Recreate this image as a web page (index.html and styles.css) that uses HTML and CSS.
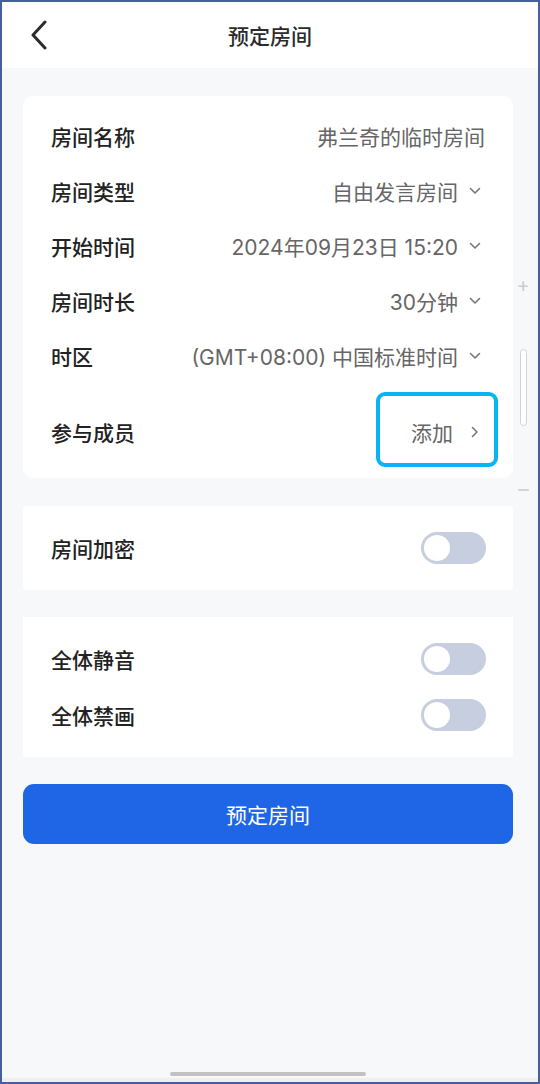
FILE: index.html
```html
<!DOCTYPE html>
<html lang="zh-CN">
<head>
    <meta charset="UTF-8">
    <meta name="viewport" content="width=device-width, initial-scale=1.0">
    <title>预定房间</title>
    <link rel="stylesheet" href="styles.css">
</head>
<body>
    <div class="phone">
        <header class="nav">
            <button class="back" aria-label="返回">
                <svg width="18" height="30" viewBox="0 0 18 30">
                    <path d="M15 2 L3 15 L15 28" fill="none" stroke="#2b2b2b" stroke-width="3" stroke-linecap="round" stroke-linejoin="round"/>
                </svg>
            </button>
            <h1 class="nav-title">预定房间</h1>
        </header>

        <main class="content">
            <section class="card card-main">
                <div class="row">
                    <span class="label">房间名称</span>
                    <span class="value">弗兰奇的临时房间</span>
                </div>
                <div class="row">
                    <span class="label">房间类型</span>
                    <span class="value">自由发言房间
                        <svg class="arrow" width="12" height="8" viewBox="0 0 12 8"><path d="M1.5 1.5 L6 6 L10.5 1.5" fill="none" stroke="#777" stroke-width="1.6" stroke-linecap="round" stroke-linejoin="round"/></svg>
                    </span>
                </div>
                <div class="row">
                    <span class="label">开始时间</span>
                    <span class="value">2024年09月23日 15:20
                        <svg class="arrow" width="12" height="8" viewBox="0 0 12 8"><path d="M1.5 1.5 L6 6 L10.5 1.5" fill="none" stroke="#777" stroke-width="1.6" stroke-linecap="round" stroke-linejoin="round"/></svg>
                    </span>
                </div>
                <div class="row">
                    <span class="label">房间时长</span>
                    <span class="value">30分钟
                        <svg class="arrow" width="12" height="8" viewBox="0 0 12 8"><path d="M1.5 1.5 L6 6 L10.5 1.5" fill="none" stroke="#777" stroke-width="1.6" stroke-linecap="round" stroke-linejoin="round"/></svg>
                    </span>
                </div>
                <div class="row">
                    <span class="label">时区</span>
                    <span class="value">(GMT+08:00) 中国标准时间
                        <svg class="arrow" width="12" height="8" viewBox="0 0 12 8"><path d="M1.5 1.5 L6 6 L10.5 1.5" fill="none" stroke="#777" stroke-width="1.6" stroke-linecap="round" stroke-linejoin="round"/></svg>
                    </span>
                </div>
                <div class="row row-members">
                    <span class="label">参与成员</span>
                    <span class="value">添加
                        <svg class="arrow arrow-right" width="8" height="12" viewBox="0 0 8 12"><path d="M1.5 1.5 L6 6 L1.5 10.5" fill="none" stroke="#777" stroke-width="1.6" stroke-linecap="round" stroke-linejoin="round"/></svg>
                    </span>
                    <span class="highlight"></span>
                </div>
            </section>

            <section class="card card-flat">
                <div class="row row-switch">
                    <span class="label">房间加密</span>
                    <span class="toggle"></span>
                </div>
            </section>

            <section class="card card-flat">
                <div class="row row-switch">
                    <span class="label">全体静音</span>
                    <span class="toggle"></span>
                </div>
                <div class="row row-switch">
                    <span class="label">全体禁画</span>
                    <span class="toggle"></span>
                </div>
            </section>

            <button class="submit">预定房间</button>

            <div class="zoom-ctrl">
                <span class="zoom-plus">+</span>
                <span class="zoom-track"></span>
                <span class="zoom-minus"></span>
            </div>
        </main>

        <div class="home-area">
            <span class="home-bar"></span>
        </div>
    </div>
</body>
</html>
```

FILE: styles.css
```css
* {
    box-sizing: border-box;
}

body {
    margin: 0;
    font-family: "Inter", "Noto Sans CJK SC", sans-serif;
    background: #fff;
}

.phone {
    width: 540px;
    height: 1084px;
    border: 2px solid #45609c;
    display: flex;
    flex-direction: column;
    background: #f7f8fa;
    overflow: hidden;
}

.nav {
    height: 66px;
    flex: none;
    background: #fff;
    display: grid;
    grid-template-columns: 1fr auto 1fr;
    align-items: center;
}

.back {
    justify-self: start;
    margin-left: 28px;
    padding: 0;
    border: none;
    background: none;
    display: flex;
    cursor: pointer;
}

.nav-title {
    margin: 0;
    font-size: 21px;
    font-weight: 500;
    color: #2b2b2b;
    font-family: "Noto Sans CJK SC", sans-serif;
}

.content {
    flex: 1;
    position: relative;
    padding: 28px 25px 0 21px;
    display: flex;
    flex-direction: column;
    gap: 27px;
}

.card {
    background: #fff;
}

.card-main {
    border-radius: 10px;
    padding-top: 12px;
    padding-bottom: 2px;
    margin-bottom: 1px;
}

.card-flat {
    padding: 14px 0 14px;
}

.row {
    height: 55px;
    padding: 0 28px;
    display: flex;
    align-items: center;
    justify-content: space-between;
}

.row-switch {
    height: 56px;
    padding-right: 27px;
}

.row-members {
    position: relative;
    height: 93px;
    padding-top: 4px;
}

.label {
    font-family: "Noto Sans CJK SC", sans-serif;
    font-size: 21px;
    font-weight: 500;
    color: #222;
}

.value {
    display: flex;
    align-items: center;
    gap: 10px;
    font-size: 21px;
    color: #666;
}

.arrow {
    margin-left: 1px;
    margin-right: 4px;
}

.arrow-right {
    margin-left: 8px;
    margin-right: 6px;
}

.highlight {
    position: absolute;
    right: 15px;
    top: 9px;
    width: 122px;
    height: 75px;
    border: 4px solid #0ab3f5;
    border-radius: 9px;
}

.toggle {
    position: relative;
    width: 65px;
    height: 32px;
    margin-top: -1px;
    border-radius: 16px;
    background: #c6cedf;
}

.toggle::after {
    content: "";
    position: absolute;
    left: 3px;
    top: 3px;
    width: 26px;
    height: 26px;
    border-radius: 50%;
    background: #fff;
}

.submit {
    height: 60px;
    border: none;
    border-radius: 11px;
    background: #1e66e6;
    color: #fff;
    font-family: "Noto Sans CJK SC", sans-serif;
    font-size: 21px;
    cursor: pointer;
}

.zoom-ctrl {
    position: absolute;
    right: 9px;
    top: 209px;
    width: 12px;
    display: flex;
    flex-direction: column;
    align-items: center;
}

.zoom-plus {
    font-size: 20px;
    line-height: 16px;
    color: #c9cdd4;
}

.zoom-track {
    margin-top: 56px;
    width: 7px;
    height: 77px;
    border: 1px solid #cfd3da;
    border-radius: 4px;
    background: #fff;
}

.zoom-minus {
    margin-top: 63px;
    width: 11px;
    height: 2px;
    background: #cfd3da;
    border-radius: 1px;
}

.home-area {
    height: 12px;
    flex: none;
    position: relative;
    border-bottom: 4px solid #efefef;
}

.home-bar {
    position: absolute;
    left: 168px;
    top: 2px;
    width: 196px;
    height: 4px;
    border-radius: 2px;
    background: #c2c2c2;
}
```
